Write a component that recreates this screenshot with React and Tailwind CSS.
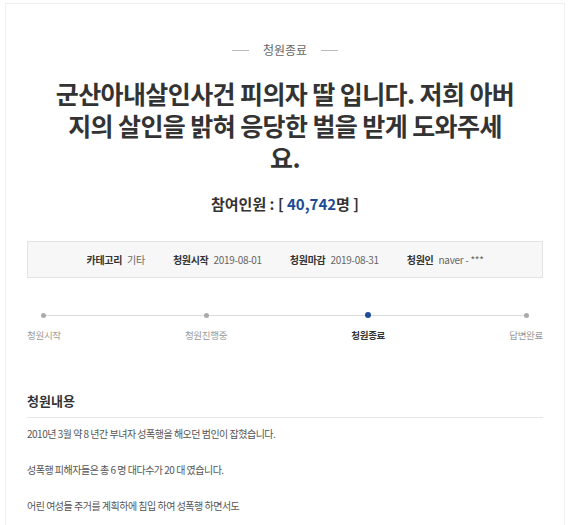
import React from "react";

const font = { fontFamily: '"Noto Sans CJK KR", "Noto Sans", sans-serif' };

function Meta({ label, value }) {
  return (
    <div className="flex items-center gap-[5px]">
      <span className="font-bold text-[#333]">{label}</span>
      <span className="text-[#666]">{value}</span>
    </div>
  );
}

function Step({ label, active }) {
  return (
    <div className="flex flex-col items-center">
      <div className="h-[6px] flex items-center justify-center">
        {active ? (
          <span className="w-[6px] h-[6px] rounded-full bg-[#1f4d99]" />
        ) : (
          <span className="w-[5px] h-[5px] rounded-full bg-[#aaa]" />
        )}
      </div>
      <span
        className={
          "mt-[10px] text-[9.5px] leading-[14px] tracking-[-0.3px] " +
          (active ? "font-bold text-[#333]" : "text-[#999]")
        }
      >
        {label}
      </span>
    </div>
  );
}

export default function App() {
  return (
    <div className="w-[570px] h-[525px] bg-white overflow-hidden" style={font}>
      {/* 카드 */}
      <div className="mt-[3px] mx-[5px] h-[600px] border border-[#efefef] px-[21px] pt-[37px]">
        {/* 상태 */}
        <div className="flex items-center justify-center gap-[14px] text-[12px] leading-[18px] text-[#666]">
          <span className="w-[17px] h-px bg-[#bbb]" />
          <span>청원종료</span>
          <span className="w-[17px] h-px bg-[#bbb]" />
        </div>

        {/* 제목 */}
        <h1 className="mt-[18px] text-center text-[25px] leading-[32px] font-bold text-[#333] tracking-[-0.6px]">
          군산아내살인사건 피의자 딸 입니다. 저희 아버
          <br />
          지의 살인을 밝혀 응당한 벌을 받게 도와주세
          <br />
          요.
        </h1>

        {/* 참여인원 */}
        <p className="mt-[20px] text-center text-[15px] leading-[22px] font-bold text-[#333]">
          참여인원 : [ <span className="text-[#1d4a94]">40,742</span>명 ]
        </p>

        {/* 정보 */}
        <div className="mt-[26px] h-[37px] bg-[#f7f7f7] border border-[#e3e3e3] flex items-center justify-center gap-[28px] text-[10px] tracking-[-0.3px]">
          <Meta label="카테고리" value="기타" />
          <Meta label="청원시작" value="2019-08-01" />
          <Meta label="청원마감" value="2019-08-31" />
          <Meta label="청원인" value="naver - ***" />
        </div>

        {/* 진행 단계 */}
        <div className="relative mt-[34px]">
          <div className="absolute left-[16px] right-[17px] top-[2.5px] h-px bg-[#dcdcdc]" />
          <div className="relative flex justify-between">
            <Step label="청원시작" />
            <Step label="청원진행중" />
            <Step label="청원종료" active />
            <Step label="답변완료" />
          </div>
        </div>

        {/* 청원내용 */}
        <h2 className="mt-[49px] pb-[6px] border-b border-[#e6e6e6] text-[13px] leading-[20px] font-bold text-[#333]">
          청원내용
        </h2>
        <div className="mt-[7px] text-[10px] leading-[18px] text-[#555] tracking-[-0.5px]">
          <p>2010년 3월 약 8 년간 부녀자 성폭행을 해오던 범인이 잡혔습니다.</p>
          <p>&nbsp;</p>
          <p>성폭행 피해자들은 총 6 명 대다수가 20 대 였습니다.</p>
          <p>&nbsp;</p>
          <p>어린 여성들 주거를 계획하에 침입 하여 성폭행 하면서도</p>
        </div>
      </div>
    </div>
  );
}
